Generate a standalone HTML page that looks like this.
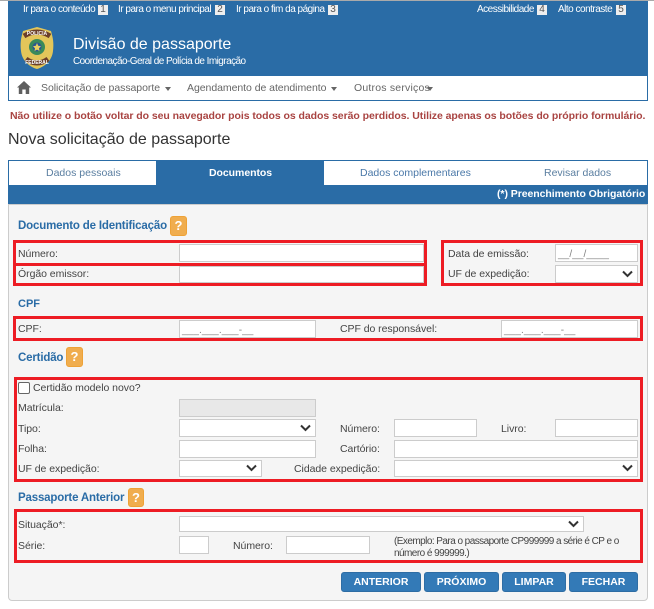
<!DOCTYPE html>
<html lang="pt"><head><meta charset="utf-8"><title>Nova solicitação de passaporte</title>
<style>
html,body{margin:0;padding:0;background:#fff}
body{width:654px;height:609px;position:relative;overflow:hidden;font-family:"Liberation Sans",sans-serif;font-size:11px;color:#444}
.a,.t,.i,.r,.b,.h{position:absolute;box-sizing:border-box}
.t{white-space:nowrap;line-height:14px}
.l{letter-spacing:-.05px}
.i{background:#fff;border:1px solid #ccc;height:18px}
.i svg{position:absolute;right:4px;top:4px}
.s{font-size:10px;color:#808080;letter-spacing:.1px;padding:3px 0 0 2px;line-height:14px;white-space:nowrap}
.r{border:3px solid #ed1c24}
.h{background:#f0ad4e;border:1px solid #eea236;border-radius:3px;color:#fff;font-weight:bold;font-size:13px;text-align:center;line-height:18px}
.tit{color:#2a6ca6;font-weight:bold;font-size:11.5px;letter-spacing:-.17px}
.b{background:#337ab7;border:1px solid #2e6da4;border-radius:3px;color:#fff;font-weight:bold;font-size:10.5px;text-align:center;line-height:18px;height:20px;top:572px}
.w{color:#fff;font-size:10px;letter-spacing:-.5px}
.n{position:absolute;background:#eee;color:#555;font-size:10px;width:10px;height:10px;line-height:10px;text-align:center;top:5px}
.tab{color:#5a7ea0;letter-spacing:0}
.c{border-top:4px solid #666;border-left:3px solid transparent;border-right:3px solid transparent;width:0;height:0;position:absolute}
</style></head><body>
<div class="a" style="left:0;top:0;width:654px;height:1px;background:#aaa"></div>
<div class="a" style="left:8px;top:1px;width:640px;height:75px;background:#2a6ca6"></div>
<div class="a" style="left:8px;top:76px;width:640px;height:25px;background:#fff;border:1px solid #2a6ca6;border-top:0"></div>

<div class="t w" style="left:23px;top:3px">Ir para o conteúdo</div><div class="n" style="left:98px">1</div>
<div class="t w" style="left:118px;top:3px">Ir para o menu principal</div><div class="n" style="left:215px">2</div>
<div class="t w" style="left:236px;top:3px">Ir para o fim da página</div><div class="n" style="left:328px">3</div>
<div class="t w" style="left:477px;top:3px">Acessibilidade</div><div class="n" style="left:537px">4</div>
<div class="t w" style="left:558px;top:3px">Alto contraste</div><div class="n" style="left:616px">5</div>

<svg class="a" style="left:20px;top:26px" width="34" height="44" viewBox="0 0 34 44">
<path d="M3 5 L17 1 L31 5 C33 12 34 17 33 25 C32 35 24 41 17 43 C10 41 2 35 1 25 C0 17 1 12 3 5Z" fill="#e3c65a"/>
<path d="M4 10 Q17 2 30 10" fill="none" stroke="#6b3f2a" stroke-width="5"/>
<path d="M6 33 Q17 41 28 33" fill="none" stroke="#6b3f2a" stroke-width="5"/>
<text x="17" y="9" font-size="5" font-weight="bold" fill="#fff" text-anchor="middle" font-family="Liberation Sans, sans-serif">POLICIA</text>
<text x="17" y="38" font-size="5" font-weight="bold" fill="#fff" text-anchor="middle" font-family="Liberation Sans, sans-serif">FEDERAL</text>
<circle cx="17" cy="21" r="8" fill="#3a8a5a"/><circle cx="17" cy="21" r="4.500" fill="#2a5590"/>
<path d="M17 17l1.200 2.800 2.800.4-2 2 .5 2.800-2.500-1.400-2.500 1.400.5-2.800-2-2 2.800-.4z" fill="#e8d060"/>
</svg>

<div class="t" style="left:73px;top:36px;font-size:16px;line-height:18px;color:#fff">Divisão de passaporte</div>
<div class="t" style="left:73px;top:55px;font-size:10px;color:#fff;letter-spacing:-.55px">Coordenação-Geral de Polícia de Imigração</div>

<svg class="a" style="left:17px;top:81px" width="14" height="13" viewBox="0 0 14 13"><path d="M7 0 L14 6.500 L12.200 6.500 L12.200 13 L8.700 13 L8.700 8.500 L5.300 8.500 L5.300 13 L1.800 13 L1.800 6.500 L0 6.500Z" fill="#5f5f5f"/></svg>
<div class="t l" style="left:41px;top:81px;color:#666;font-size:10.500px">Solicitação de passaporte</div><div class="c" style="left:165px;top:87px"></div>
<div class="t l" style="left:187px;top:81px;color:#666;font-size:10.500px">Agendamento de atendimento</div><div class="c" style="left:331px;top:87px"></div>
<div class="t" style="left:354px;top:81px;color:#666;font-size:10.500px;letter-spacing:.2px">Outros serviços</div><div class="c" style="left:427px;top:87px"></div>

<div class="t" style="left:10px;top:109px;color:#a94442;font-weight:bold;font-size:10.500px;letter-spacing:-.055px">Não utilize o botão voltar do seu navegador pois todos os dados serão perdidos. Utilize apenas os botões do próprio formulário.</div>
<div class="t" style="left:8px;top:130px;font-size:16px;line-height:19px;color:#333">Nova solicitação de passaporte</div>

<div class="a" style="left:8px;top:160px;width:640px;height:45px;background:#2a6ca6"></div>
<div class="a" style="left:9px;top:161px;width:147px;height:24px;background:#fff"></div>
<div class="a" style="left:324px;top:161px;width:323px;height:24px;background:#fff"></div>
<div class="t tab" style="left:46px;top:166px;font-size:10.500px">Dados pessoais</div>
<div class="t" style="left:209px;top:166px;color:#fff;font-weight:bold;font-size:10.500px;letter-spacing:-.05px">Documentos</div>
<div class="t tab" style="left:360px;top:166px;font-size:10.500px;color:#4a78a8">Dados complementares</div>
<div class="t tab" style="left:544px;top:166px;font-size:10.500px">Revisar dados</div>
<div class="t" style="left:497px;top:187px;color:#fff;font-weight:bold;font-size:10.500px;letter-spacing:-.06px">(*) Preenchimento Obrigatório</div>

<div class="a" style="left:8px;top:204px;width:640px;height:397px;background:#f5f5f5;border:1px solid #ccc;border-top:1px solid #ccc;border-radius:0 0 4px 4px"></div>

<div class="t tit" style="left:18px;top:219px">Documento de Identificação</div><div class="h" style="left:170px;top:216px;width:17px;height:20px">?</div>
<div class="r" style="left:13px;top:240px;width:414px;height:26px"></div>
<div class="r" style="left:13px;top:263px;width:414px;height:23px"></div>
<div class="r" style="left:441px;top:240px;width:202px;height:46px"></div>
<div class="t l" style="left:18px;top:247px;font-size:10.500px">Número:</div><div class="i" style="left:179px;top:244px;width:245px"></div>
<div class="t l" style="left:18px;top:267px;font-size:10.500px">Órgão emissor:</div><div class="i" style="left:179px;top:266px;width:245px;height:17px"></div>
<div class="t l" style="left:448px;top:247px;font-size:10.500px">Data de emissão:</div><div class="i s" style="left:555px;top:244px;width:83px">__/__/____</div>
<div class="t l" style="left:448px;top:267px;font-size:10.500px">UF de expedição:</div><div class="i" style="left:555px;top:265px;width:83px"><svg width="11" height="8" viewBox="0 0 11 8"><path d="M1 1.500 L5.500 6 L10 1.500" fill="none" stroke="#333" stroke-width="2"/></svg></div>

<div class="t" style="left:18px;top:297px;color:#2a6ca6;font-weight:bold;font-size:11px">CPF</div>
<div class="r" style="left:13px;top:316px;width:630px;height:25px"></div>
<div class="t l" style="left:18px;top:322px;font-size:10.500px">CPF:</div><div class="i s" style="left:179px;top:320px;width:137px">___.___.___-__</div>
<div class="t l" style="left:340px;top:322px;font-size:10.500px">CPF do responsável:</div><div class="i s" style="left:501px;top:320px;width:137px">___.___.___-__</div>

<div class="t tit" style="left:18px;top:351px">Certidão</div><div class="h" style="left:66px;top:347px;width:17px;height:20px">?</div>
<div class="r" style="left:14px;top:377px;width:629px;height:105px"></div>
<div class="a" style="left:18px;top:382px;width:12px;height:12px;background:#fff;border:1px solid #666;border-radius:2px"></div>
<div class="t l" style="left:33px;top:381px;font-size:10.500px">Certidão modelo novo?</div>
<div class="t l" style="left:18px;top:401px;font-size:10.500px">Matrícula:</div><div class="i" style="left:179px;top:399px;width:137px;background:#e8e8e8"></div>
<div class="t l" style="left:18px;top:422px;font-size:10.500px">Tipo:</div><div class="i" style="left:179px;top:419px;width:137px"><svg width="11" height="8" viewBox="0 0 11 8"><path d="M1 1.500 L5.500 6 L10 1.500" fill="none" stroke="#333" stroke-width="2"/></svg></div>
<div class="t l" style="left:340px;top:422px;font-size:10.500px">Número:</div><div class="i" style="left:394px;top:419px;width:83px"></div>
<div class="t l" style="left:501px;top:422px;font-size:10.500px">Livro:</div><div class="i" style="left:555px;top:419px;width:83px"></div>
<div class="t l" style="left:18px;top:442px;font-size:10.500px">Folha:</div><div class="i" style="left:179px;top:440px;width:137px"></div>
<div class="t l" style="left:340px;top:442px;font-size:10.500px">Cartório:</div><div class="i" style="left:394px;top:440px;width:244px"></div>
<div class="t l" style="left:18px;top:462px;font-size:10.500px">UF de expedição:</div><div class="i" style="left:179px;top:460px;width:83px;height:17px"><svg width="11" height="8" viewBox="0 0 11 8" style="top:3px"><path d="M1 1.500 L5.500 6 L10 1.500" fill="none" stroke="#333" stroke-width="2"/></svg></div>
<div class="t l" style="left:294px;top:462px;font-size:10.500px">Cidade expedição:</div><div class="i" style="left:394px;top:460px;width:244px;height:17px"><svg width="11" height="8" viewBox="0 0 11 8" style="top:3px"><path d="M1 1.500 L5.500 6 L10 1.500" fill="none" stroke="#333" stroke-width="2"/></svg></div>

<div class="t tit" style="left:18px;top:491px">Passaporte Anterior</div><div class="h" style="left:128px;top:488px;width:16px;height:19px">?</div>
<div class="r" style="left:14px;top:509px;width:629px;height:54px"></div>
<div class="t l" style="left:18px;top:518px;font-size:10.500px">Situação*:</div><div class="i" style="left:179px;top:516px;width:405px;height:16px"><svg width="11" height="8" viewBox="0 0 11 8" style="top:3px"><path d="M1 1.500 L5.500 6 L10 1.500" fill="none" stroke="#333" stroke-width="2"/></svg></div>
<div class="t l" style="left:18px;top:539px;font-size:10.500px">Série:</div><div class="i" style="left:179px;top:536px;width:30px"></div>
<div class="t l" style="left:233px;top:539px;font-size:10.500px">Número:</div><div class="i" style="left:286px;top:536px;width:84px"></div>
<div class="t" style="left:394px;top:536px;font-size:10px;line-height:12px;letter-spacing:-.55px">(Exemplo: Para o passaporte CP999999 a série é CP e o<br>número é 999999.)</div>

<div class="b" style="left:341px;width:80px">ANTERIOR</div>
<div class="b" style="left:424px;width:75px">PRÓXIMO</div>
<div class="b" style="left:502px;width:64px">LIMPAR</div>
<div class="b" style="left:569px;width:69px">FECHAR</div>
</body></html>
